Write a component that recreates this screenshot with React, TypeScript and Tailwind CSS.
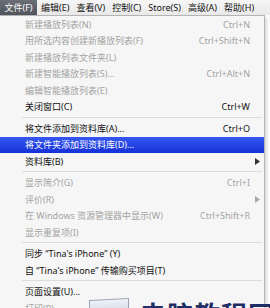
import { ReactNode } from "react";

type Entry =
  | "sep"
  | {
      label: ReactNode;
      shortcut?: string;
      disabled?: boolean;
      submenu?: boolean;
      active?: boolean;
    };

const topMenus = ["编辑(E)", "查看(V)", "控制(C)", "Store(S)", "高级(A)", "帮助(H)"];

const entries: Entry[] = [
  { label: "新建播放列表(N)", shortcut: "Ctrl+N", disabled: true },
  { label: "用所选内容创建新播放列表(F)", shortcut: "Ctrl+Shift+N", disabled: true },
  { label: "新建播放列表文件夹(L)", disabled: true },
  { label: "新建智能播放列表(S)...", shortcut: "Ctrl+Alt+N", disabled: true },
  { label: "编辑智能播放列表(E)", disabled: true },
  { label: "关闭窗口(C)", shortcut: "Ctrl+W" },
  "sep",
  { label: "将文件添加到资料库(A)...", shortcut: "Ctrl+O" },
  { label: "将文件夹添加到资料库(D)...", active: true },
  { label: "资料库(B)", submenu: true },
  "sep",
  { label: "显示简介(G)", shortcut: "Ctrl+I", disabled: true },
  { label: "评价(R)", submenu: true, disabled: true },
  { label: "在 Windows 资源管理器中显示(W)", shortcut: "Ctrl+Shift+R", disabled: true },
  { label: "显示重复项(I)", disabled: true },
  "sep",
  { label: <>同步 “Tina's iPhone” (Y)</> },
  { label: <>自 “Tina's iPhone” 传输购买项目(T)</> },
  "sep",
  { label: "页面设置(U)..." },
  { label: "打印(P)...", disabled: true },
];

function Arrow({ color }: { color: string }) {
  return (
    <svg width="5" height="7" viewBox="0 0 5 7">
      <path d="M0 0 L5 3.5 L0 7 Z" fill={color} />
    </svg>
  );
}

export default function App() {
  return (
    <div className="relative w-[270px] h-[308px] overflow-hidden bg-white font-['Noto_Sans','Noto_Sans_CJK_SC',sans-serif] text-[9px] leading-none">
      {/* ── Menu bar ── */}
      <div className="flex h-[15px] items-center bg-gradient-to-b from-[#f6f6f6] to-[#e9e9e9] text-[#111]">
        <div className="flex h-full w-[37px] items-center justify-center bg-gradient-to-b from-[#6a6e76] to-[#50545c] text-white">
          文件(F)
        </div>
        <div className="flex h-full items-center gap-[7px] pl-[4px]">
          {topMenus.map((m) => (
            <span key={m} className="whitespace-nowrap">
              {m}
            </span>
          ))}
        </div>
      </div>

      {/* ── Dropdown ── */}
      <div className="flex">
        <div className="w-[265px] border-t border-r border-b border-[#b4b4b4] bg-[#f6f6f6] pb-[2px] shadow-[2px_2px_3px_rgba(0,0,0,0.15)]">
          {entries.map((e, i) =>
            e === "sep" ? (
              <div key={i} className="flex h-[5px] items-center pl-[22px] pr-[2px]">
                <div className="h-[2px] w-full border-t border-[#dcdcdc] border-b-white" />
              </div>
            ) : (
              <div
                key={i}
                className={`flex h-[16.5px] items-center pl-[25px] pr-[14px] whitespace-nowrap ${
                  e.active
                    ? "bg-gradient-to-b from-[#3556f0] to-[#1630d8] text-white"
                    : e.disabled
                    ? "text-[#a3a3a3]"
                    : "text-[#111]"
                }`}
              >
                <span className="flex-1">{e.label}</span>
                {e.shortcut && <span className="font-['Noto_Sans',sans-serif]">{e.shortcut}</span>}
                {e.submenu && (
                  <span className="-mr-[10px]">
                    <Arrow color={e.disabled ? "#a8a8a8" : "#333"} />
                  </span>
                )}
              </div>
            )
          )}
        </div>
      </div>

      {/* ── Watermark overlay at bottom ── */}
      <div className="absolute left-[89px] top-[299px] h-[14px] w-[40px] -skew-y-3 border border-[#9aa4b4] bg-gradient-to-b from-[#eef2f8] to-[#d6dde8]" />
      <div className="absolute left-[140px] top-[301px] whitespace-nowrap font-['Noto_Sans_CJK_SC',sans-serif] text-[26px] font-bold leading-none tracking-[1px] text-[#1e2d66]">
        电脑教程网
      </div>
    </div>
  );
}
